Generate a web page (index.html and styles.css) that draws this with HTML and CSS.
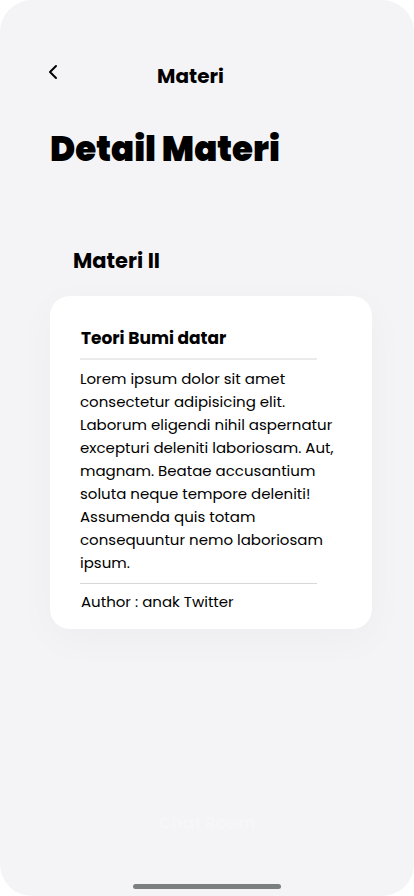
FILE: index.html
```
<!DOCTYPE html>
<html lang="id">
<head>
<meta charset="utf-8">
<meta name="viewport" content="width=device-width, initial-scale=1">
<title>Detail Materi</title>
<link rel="stylesheet" href="styles.css">
</head>
<body>
<div class="screen">
  <header class="topbar">
    <button class="back" type="button" aria-label="Kembali">
      <svg width="10" height="16" viewBox="0 0 10 16" fill="none" stroke="currentColor" stroke-width="2" stroke-linecap="round" stroke-linejoin="round"><path d="M8 2 2 8l6 6"/></svg>
    </button>
    <p class="topbar-title">Materi</p>
  </header>
  <main class="content">
    <h1 class="title">Detail Materi</h1>
    <h2 class="section">Materi II</h2>
    <article class="card">
      <h3 class="card-title">Teori Bumi datar</h3>
      <hr class="rule rule-thick">
      <p class="card-text">Lorem ipsum dolor sit amet<br>consectetur adipisicing elit.<br>Laborum eligendi nihil aspernatur<br>excepturi deleniti laboriosam. Aut,<br>magnam. Beatae accusantium<br>soluta neque tempore deleniti!<br>Assumenda quis totam<br>consequuntur nemo laboriosam<br>ipsum.</p>
      <hr class="rule">
      <p class="author">Author : anak Twitter</p>
    </article>
  </main>
  <footer class="footer">
    <a class="chat" href="#chat">Chat Room</a>
    <div class="home-bar"></div>
  </footer>
</div>
</body>
</html>
```
FILE: styles.css
```
* {
  box-sizing: border-box;
}

body {
  margin: 0;
  background: #fff;
  color: #000;
  font-family: Poppins, Inter, sans-serif;
}

h1, h2, h3, p {
  margin: 0;
}

.screen {
  display: flex;
  flex-direction: column;
  min-height: 100vh;
  background: #f4f4f7;
  border-radius: 32px;
}

.topbar {
  display: grid;
  grid-template-columns: 40px 1fr 40px;
  align-items: start;
  padding: 60px 66px 0 33px;
}

.back {
  width: 40px;
  height: 24px;
  padding: 0;
  border: 0;
  background: none;
  color: #000;
}

.back svg {
  display: block;
  margin: 0 auto;
}

.topbar-title {
  padding: 1px 0;
  font-size: 20px;
  font-weight: 700;
  line-height: 30px;
  text-align: center;
}

.content {
  padding: 30px 42px 0 50px;
}

.title {
  font-size: 34px;
  font-weight: 900;
  line-height: 54px;
}

.section {
  margin: 70px 0 20px 23px;
  font-size: 21px;
  font-weight: 700;
  line-height: 30px;
}

.card {
  padding: 30px 30px 16px;
  border-radius: 20px;
  background: #fff;
  box-shadow: 0 10px 40px rgba(0, 0, 0, 0.03);
}

.card-title {
  padding-left: 1px;
  font-size: 17px;
  font-weight: 700;
  line-height: 24px;
}

.rule {
  height: 1px;
  margin: 9px 25px 7px 0;
  border: 0;
  background: #d8d8d8;
}

.rule-thick {
  height: 2px;
  margin-top: 8px;
  background: #ebebeb;
}

.card-text {
  font-size: 15px;
  line-height: 23px;
  white-space: nowrap;
}

.author {
  padding-left: 1px;
  font-size: 15px;
  line-height: 22px;
}

.footer {
  display: flex;
  flex-direction: column;
  align-items: center;
  gap: 47px;
  margin-top: auto;
  padding-bottom: 7px;
}

.chat {
  color: #f6f6f9;
  font-size: 17px;
  font-weight: 700;
  line-height: 27px;
  text-decoration: none;
}

.home-bar {
  width: 148px;
  height: 5px;
  border-radius: 3px;
  background: #7b7f80;
}
```
